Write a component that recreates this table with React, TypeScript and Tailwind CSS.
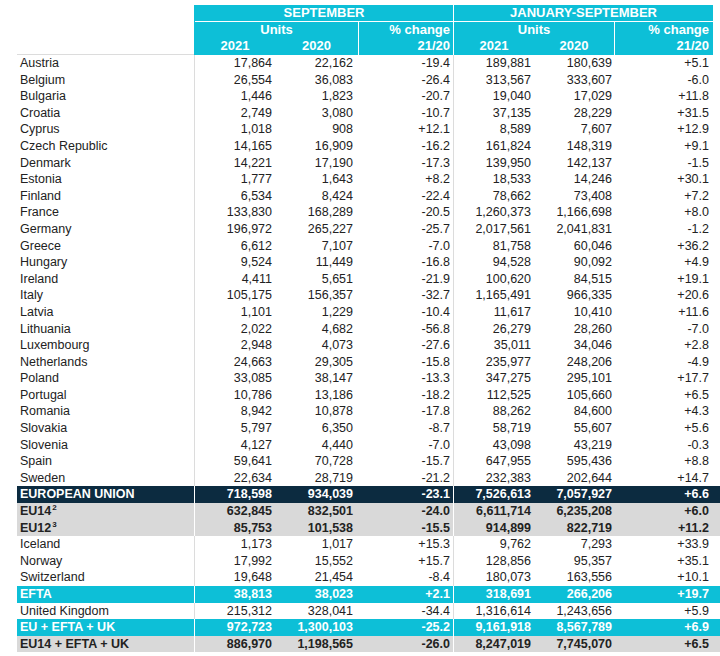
import React from 'react';

type Variant = 'plain' | 'eu' | 'grey' | 'cyan';

interface RowData {
  label: string;
  sup?: string;
  v: string[];
  variant?: Variant;
  line?: boolean;
}

const rows: RowData[] = [
  { label: 'Austria', v: ['17,864', '22,162', '-19.4', '189,881', '180,639', '+5.1'] },
  { label: 'Belgium', v: ['26,554', '36,083', '-26.4', '313,567', '333,607', '-6.0'] },
  { label: 'Bulgaria', v: ['1,446', '1,823', '-20.7', '19,040', '17,029', '+11.8'] },
  { label: 'Croatia', v: ['2,749', '3,080', '-10.7', '37,135', '28,229', '+31.5'] },
  { label: 'Cyprus', v: ['1,018', '908', '+12.1', '8,589', '7,607', '+12.9'] },
  { label: 'Czech Republic', v: ['14,165', '16,909', '-16.2', '161,824', '148,319', '+9.1'] },
  { label: 'Denmark', v: ['14,221', '17,190', '-17.3', '139,950', '142,137', '-1.5'] },
  { label: 'Estonia', v: ['1,777', '1,643', '+8.2', '18,533', '14,246', '+30.1'] },
  { label: 'Finland', v: ['6,534', '8,424', '-22.4', '78,662', '73,408', '+7.2'] },
  { label: 'France', v: ['133,830', '168,289', '-20.5', '1,260,373', '1,166,698', '+8.0'] },
  { label: 'Germany', v: ['196,972', '265,227', '-25.7', '2,017,561', '2,041,831', '-1.2'] },
  { label: 'Greece', v: ['6,612', '7,107', '-7.0', '81,758', '60,046', '+36.2'] },
  { label: 'Hungary', v: ['9,524', '11,449', '-16.8', '94,528', '90,092', '+4.9'] },
  { label: 'Ireland', v: ['4,411', '5,651', '-21.9', '100,620', '84,515', '+19.1'] },
  { label: 'Italy', v: ['105,175', '156,357', '-32.7', '1,165,491', '966,335', '+20.6'] },
  { label: 'Latvia', v: ['1,101', '1,229', '-10.4', '11,617', '10,410', '+11.6'] },
  { label: 'Lithuania', v: ['2,022', '4,682', '-56.8', '26,279', '28,260', '-7.0'] },
  { label: 'Luxembourg', v: ['2,948', '4,073', '-27.6', '35,011', '34,046', '+2.8'] },
  { label: 'Netherlands', v: ['24,663', '29,305', '-15.8', '235,977', '248,206', '-4.9'] },
  { label: 'Poland', v: ['33,085', '38,147', '-13.3', '347,275', '295,101', '+17.7'] },
  { label: 'Portugal', v: ['10,786', '13,186', '-18.2', '112,525', '105,660', '+6.5'] },
  { label: 'Romania', v: ['8,942', '10,878', '-17.8', '88,262', '84,600', '+4.3'] },
  { label: 'Slovakia', v: ['5,797', '6,350', '-8.7', '58,719', '55,607', '+5.6'] },
  { label: 'Slovenia', v: ['4,127', '4,440', '-7.0', '43,098', '43,219', '-0.3'] },
  { label: 'Spain', v: ['59,641', '70,728', '-15.7', '647,955', '595,436', '+8.8'] },
  { label: 'Sweden', v: ['22,634', '28,719', '-21.2', '232,383', '202,644', '+14.7'] },
  { label: 'EUROPEAN UNION', variant: 'eu', line: true, v: ['718,598', '934,039', '-23.1', '7,526,613', '7,057,927', '+6.6'] },
  { label: 'EU14', sup: '2', variant: 'grey', v: ['632,845', '832,501', '-24.0', '6,611,714', '6,235,208', '+6.0'] },
  { label: 'EU12', sup: '3', variant: 'grey', v: ['85,753', '101,538', '-15.5', '914,899', '822,719', '+11.2'] },
  { label: 'Iceland', v: ['1,173', '1,017', '+15.3', '9,762', '7,293', '+33.9'] },
  { label: 'Norway', v: ['17,992', '15,552', '+15.7', '128,856', '95,357', '+35.1'] },
  { label: 'Switzerland', v: ['19,648', '21,454', '-8.4', '180,073', '163,556', '+10.1'] },
  { label: 'EFTA', variant: 'cyan', line: true, v: ['38,813', '38,023', '+2.1', '318,691', '266,206', '+19.7'] },
  { label: 'United Kingdom', v: ['215,312', '328,041', '-34.4', '1,316,614', '1,243,656', '+5.9'] },
  { label: 'EU + EFTA + UK', variant: 'cyan', line: true, v: ['972,723', '1,300,103', '-25.2', '9,161,918', '8,567,789', '+6.9'] },
  { label: 'EU14 + EFTA + UK', variant: 'grey', v: ['886,970', '1,198,565', '-26.0', '8,247,019', '7,745,070', '+6.5'] },
];

const cellCls = [
  'w-[80px] pr-[2px] border-l',
  'w-[84px] pr-[5px]',
  'w-[95px] pr-[3px]',
  'w-[81px] pr-[3px] border-l',
  'w-[80px] pr-[2px]',
  'w-[99px] pr-[4px]',
];

const variantCls: Record<Variant, string> = {
  plain: 'bg-white text-[#222] border-[#dcdcdc]',
  eu: 'bg-[#0c2b40] text-white font-bold border-white',
  grey: 'bg-[#d9d9d9] text-[#222] font-bold border-white',
  cyan: 'bg-[#0dbfd7] text-white font-bold border-white',
};

const Row = ({ r }: { r: RowData }) => {
  const variant = r.variant ?? 'plain';
  const colours = variantCls[variant];
  return (
    <div className={`flex h-[16.6px] leading-[16.6px] ${colours} ${r.line ? 'shadow-[0_1px_0_#fff]' : ''}`}>
      <div className="w-[177px] pl-[3px] whitespace-nowrap">
        {r.label}
        {r.sup && <sup className="text-[8px] leading-none ml-[1px] relative -top-[5px]">{r.sup}</sup>}
      </div>
      {r.v.map((val, i) => (
        <div key={i} className={`${cellCls[i]} ${colours} text-right whitespace-nowrap`}>
          {val}
        </div>
      ))}
    </div>
  );
};

export default function App() {
  return (
    <div className="w-[720px] h-[656px] bg-white overflow-hidden pl-[17px] pt-[5px] font-['Liberation_Sans',Arial,sans-serif] text-[12.5px]">
      {/* header */}
      <div className="flex h-[50px]">
        <div className="w-[177px] border-b border-[#dcdcdc]"></div>
        <div className="w-[259px] bg-[#0dbfd7] text-white font-bold text-[13px] leading-[16.6px] border-l border-[#0dbfd7]">
          <div className="h-[16.6px] text-center border-b border-white">SEPTEMBER</div>
          <div className="flex">
            <div className="w-[163px]">
              <div className="text-center">Units</div>
              <div className="flex">
                <div className="w-[80px] text-center">2021</div>
                <div className="w-[83px] text-center">2020</div>
              </div>
            </div>
            <div className="w-[96px] border-l border-white pr-[3px] text-right">
              <div>% change</div>
              <div>21/20</div>
            </div>
          </div>
        </div>
        <div className="w-[260px] bg-[#0dbfd7] text-white font-bold text-[13px] leading-[16.6px] border-l border-white">
          <div className="h-[16.6px] text-center border-b border-white">JANUARY-SEPTEMBER</div>
          <div className="flex">
            <div className="w-[160px]">
              <div className="text-center">Units</div>
              <div className="flex">
                <div className="w-[80px] text-center">2021</div>
                <div className="w-[80px] text-center">2020</div>
              </div>
            </div>
            <div className="w-[99px] border-l border-white pr-[4px] text-right">
              <div>% change</div>
              <div>21/20</div>
            </div>
          </div>
        </div>
      </div>
      {rows.map((r) => (
        <Row key={r.label} r={r} />
      ))}
    </div>
  );
}
